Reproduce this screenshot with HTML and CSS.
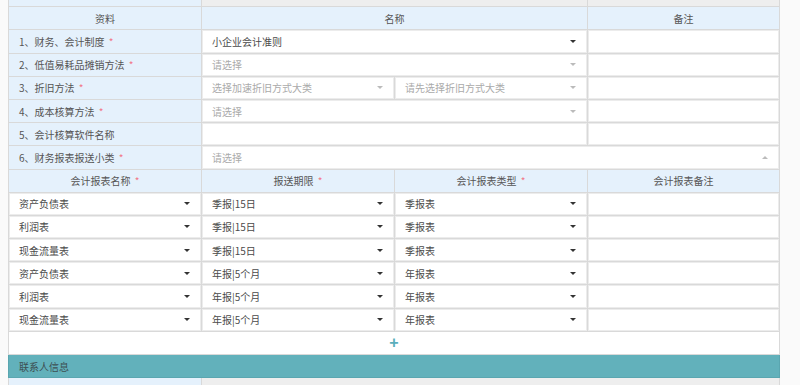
FILE: index.html
```html
<!DOCTYPE html>
<html lang="zh-CN">
<head>
    <meta charset="UTF-8">
    <meta name="viewport" content="width=device-width, initial-scale=1.0">
    <title>财务会计制度备案</title>
    <link rel="stylesheet" href="styles.css">
</head>
<body>

    <div class="page">
        <table class="form-table">
            <colgroup>
                <col class="c1"><col class="c2"><col class="c3"><col class="c4">
            </colgroup>

            <!-- row cut off at the top of the view -->
            <tr class="row-cut">
                <td class="label"></td>
                <td colspan="2" class="off"></td>
                <td class="off"></td>
            </tr>

            <tr class="head">
                <th>资料</th>
                <th colspan="2">名称</th>
                <th>备注</th>
            </tr>

            <tr>
                <td class="label">1、财务、会计制度 <span class="req">*</span></td>
                <td colspan="2" class="ctl"><div class="select"><span>小企业会计准则</span><i class="caret"></i></div></td>
                <td class="ctl"></td>
            </tr>
            <tr>
                <td class="label">2、低值易耗品摊销方法 <span class="req">*</span></td>
                <td colspan="2" class="ctl"><div class="select empty"><span>请选择</span><i class="caret"></i></div></td>
                <td class="ctl"></td>
            </tr>
            <tr>
                <td class="label">3、折旧方法 <span class="req">*</span></td>
                <td class="ctl"><div class="select empty"><span>选择加速折旧方式大类</span><i class="caret"></i></div></td>
                <td class="ctl"><div class="select empty"><span>请先选择折旧方式大类</span><i class="caret"></i></div></td>
                <td class="ctl"></td>
            </tr>
            <tr>
                <td class="label">4、成本核算方法 <span class="req">*</span></td>
                <td colspan="2" class="ctl"><div class="select empty"><span>请选择</span><i class="caret"></i></div></td>
                <td class="ctl"></td>
            </tr>
            <tr>
                <td class="label">5、会计核算软件名称</td>
                <td colspan="2" class="ctl"></td>
                <td class="ctl"></td>
            </tr>
            <tr>
                <td class="label">6、财务报表报送小类 <span class="req">*</span></td>
                <td colspan="3" class="ctl"><div class="select empty open"><span>请选择</span><i class="caret"></i></div></td>
            </tr>

            <tr class="head">
                <th>会计报表名称 <span class="req">*</span></th>
                <th>报送期限 <span class="req">*</span></th>
                <th>会计报表类型 <span class="req">*</span></th>
                <th>会计报表备注</th>
            </tr>

            <tr>
                <td class="ctl"><div class="select"><span>资产负债表</span><i class="caret"></i></div></td>
                <td class="ctl"><div class="select"><span>季报|15日</span><i class="caret"></i></div></td>
                <td class="ctl"><div class="select"><span>季报表</span><i class="caret"></i></div></td>
                <td class="ctl"></td>
            </tr>
            <tr>
                <td class="ctl"><div class="select"><span>利润表</span><i class="caret"></i></div></td>
                <td class="ctl"><div class="select"><span>季报|15日</span><i class="caret"></i></div></td>
                <td class="ctl"><div class="select"><span>季报表</span><i class="caret"></i></div></td>
                <td class="ctl"></td>
            </tr>
            <tr>
                <td class="ctl"><div class="select"><span>现金流量表</span><i class="caret"></i></div></td>
                <td class="ctl"><div class="select"><span>季报|15日</span><i class="caret"></i></div></td>
                <td class="ctl"><div class="select"><span>季报表</span><i class="caret"></i></div></td>
                <td class="ctl"></td>
            </tr>
            <tr>
                <td class="ctl"><div class="select"><span>资产负债表</span><i class="caret"></i></div></td>
                <td class="ctl"><div class="select"><span>年报|5个月</span><i class="caret"></i></div></td>
                <td class="ctl"><div class="select"><span>年报表</span><i class="caret"></i></div></td>
                <td class="ctl"></td>
            </tr>
            <tr>
                <td class="ctl"><div class="select"><span>利润表</span><i class="caret"></i></div></td>
                <td class="ctl"><div class="select"><span>年报|5个月</span><i class="caret"></i></div></td>
                <td class="ctl"><div class="select"><span>年报表</span><i class="caret"></i></div></td>
                <td class="ctl"></td>
            </tr>
            <tr>
                <td class="ctl"><div class="select"><span>现金流量表</span><i class="caret"></i></div></td>
                <td class="ctl"><div class="select"><span>年报|5个月</span><i class="caret"></i></div></td>
                <td class="ctl"><div class="select"><span>年报表</span><i class="caret"></i></div></td>
                <td class="ctl"></td>
            </tr>

            <tr class="add-row">
                <td colspan="4"><span class="add">+</span></td>
            </tr>

            <tr class="section">
                <td colspan="4">联系人信息</td>
            </tr>

            <tr>
                <td class="label"></td>
                <td colspan="3" class="off"></td>
            </tr>
        </table>
    </div>

</body>
</html>
```

FILE: styles.css
```css
* {
    margin: 0;
    padding: 0;
    box-sizing: border-box;
}
html, body {
    width: 100%;
    height: 100%;
    overflow: hidden;
    background: #fafafa;
    font-family: "Microsoft YaHei", "Noto Sans CJK SC", "Liberation Sans", sans-serif;
    font-size: 10px;
    color: #555;
}
.page {
    padding-left: 8px;
}
.form-table {
    width: 771px;
    margin-top: -17px;
    table-layout: fixed;
    border-collapse: collapse;
    background: #fff;
}
.c1, .c2, .c3 {
    width: 193px;
}
.c4 {
    width: 192px;
}
.form-table td,
.form-table th {
    height: 23.2px;
    border: 1px solid #d9d9d9;
    font-weight: normal;
    white-space: nowrap;
    overflow: hidden;
}
.form-table th {
    background: #e5f1fc;
    text-align: center;
    color: #555;
}
.form-table td.label {
    background: #e5f1fc;
    padding-left: 10px;
}
.form-table td.off {
    background: #eeeeee;
}
.form-table td.ctl {
    background: #fff;
    box-shadow: inset 0 0 0 1px #ececec;
}
.req {
    color: #f2778a;
    margin-left: 2px;
}
.select {
    height: 100%;
    display: flex;
    align-items: center;
    justify-content: space-between;
    padding: 0 11px 0 10px;
    color: #4a4a4a;
}
.select .caret {
    width: 0;
    height: 0;
    border-left: 3px solid transparent;
    border-right: 3px solid transparent;
    border-top: 3px solid #333;
}
.select.empty {
    color: #aaa;
}
.select.empty .caret {
    border-top-color: #bbb;
}
.select.open .caret {
    border-top: 0;
    border-bottom: 3px solid #bbb;
}
.form-table .add-row td {
    text-align: center;
    vertical-align: middle;
    background: #fff;
    overflow: visible;
}
.add {
    display: inline-block;
    color: #5aaebb;
    font-family: "Liberation Sans", sans-serif;
    font-size: 16px;
    font-weight: bold;
    line-height: 18px;
    vertical-align: middle;
}
.section td {
    background: #62b1bb;
    padding-left: 10px;
    color: #3d4f52;
    border-color: #5aa6b0;
}
```
